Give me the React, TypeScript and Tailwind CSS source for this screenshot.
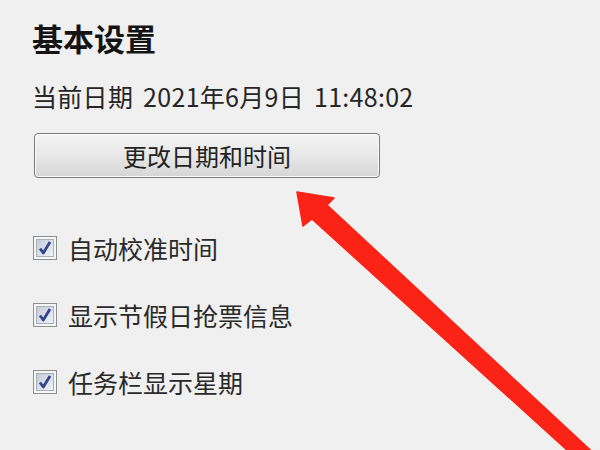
import React from 'react'

const font = { fontFamily: '"Noto Sans CJK SC", "Noto Sans", sans-serif' }

function CheckBox() {
  return (
    <svg width="24" height="24" viewBox="0 0 24 24" className="shrink-0">
      <defs>
        <linearGradient id="cbInner" x1="0" y1="0" x2="1" y2="1">
          <stop offset="0" stopColor="#c3cad8" />
          <stop offset="1" stopColor="#f2f4f8" />
        </linearGradient>
      </defs>
      <rect x="0.5" y="0.5" width="23" height="23" fill="#f6f6f6" stroke="#8d8f91" />
      <rect x="3.5" y="3.5" width="17" height="17" fill="url(#cbInner)" stroke="#a9afb8" />
      <path d="M7 12.5 L10.3 17 L17 6" fill="none" stroke="#33468c" strokeWidth="2.8" strokeLinejoin="round" />
    </svg>
  )
}

function CheckRow({ label }: { label: string }) {
  return (
    <div className="flex items-center h-[32px]">
      <CheckBox />
      <span className="ml-[11px] text-[25px] leading-[32px] text-[#2a2a2a]">{label}</span>
    </div>
  )
}

export default function App() {
  return (
    <div className="relative w-[600px] h-[450px] overflow-hidden bg-[#f0f0f0] pl-[32px] pt-[18px]" style={font}>
      <div className="flex flex-col items-start">
        <h1 className="text-[31px] leading-[40px] font-bold text-[#141414]">基本设置</h1>
        <p className="mt-[22px] text-[25px] leading-[32px] text-[#262626] tracking-[0.3px] [word-spacing:4px]">
          当前日期 2021年6月9日 11:48:02
        </p>
        <button
          className="mt-[21px] ml-[2px] w-[346px] h-[45px] rounded-[4px] border border-[#7a7a7a]
                     bg-gradient-to-b from-[#f4f4f4] via-[#e8e8e8] to-[#d6d6d6]
                     text-[24px] text-[#222] shadow-[inset_0_0_0_1px_#fbfbfb]"
        >
          更改日期和时间
        </button>
        <div className="mt-[54px] ml-[1px] flex flex-col gap-[35px]">
          <CheckRow label="自动校准时间" />
          <CheckRow label="显示节假日抢票信息" />
          <CheckRow label="任务栏显示星期" />
        </div>
      </div>

      {/* red annotation arrow */}
      <svg className="absolute inset-0 pointer-events-none" width="600" height="450" viewBox="0 0 600 450">
        <polygon
          points="297,192 334,198 327,205 601,460 578,460 312,219 303,226"
          fill="#fb2216"
          stroke="#fb2216"
          strokeWidth="1.5"
          strokeLinejoin="round"
        />
      </svg>
    </div>
  )
}
